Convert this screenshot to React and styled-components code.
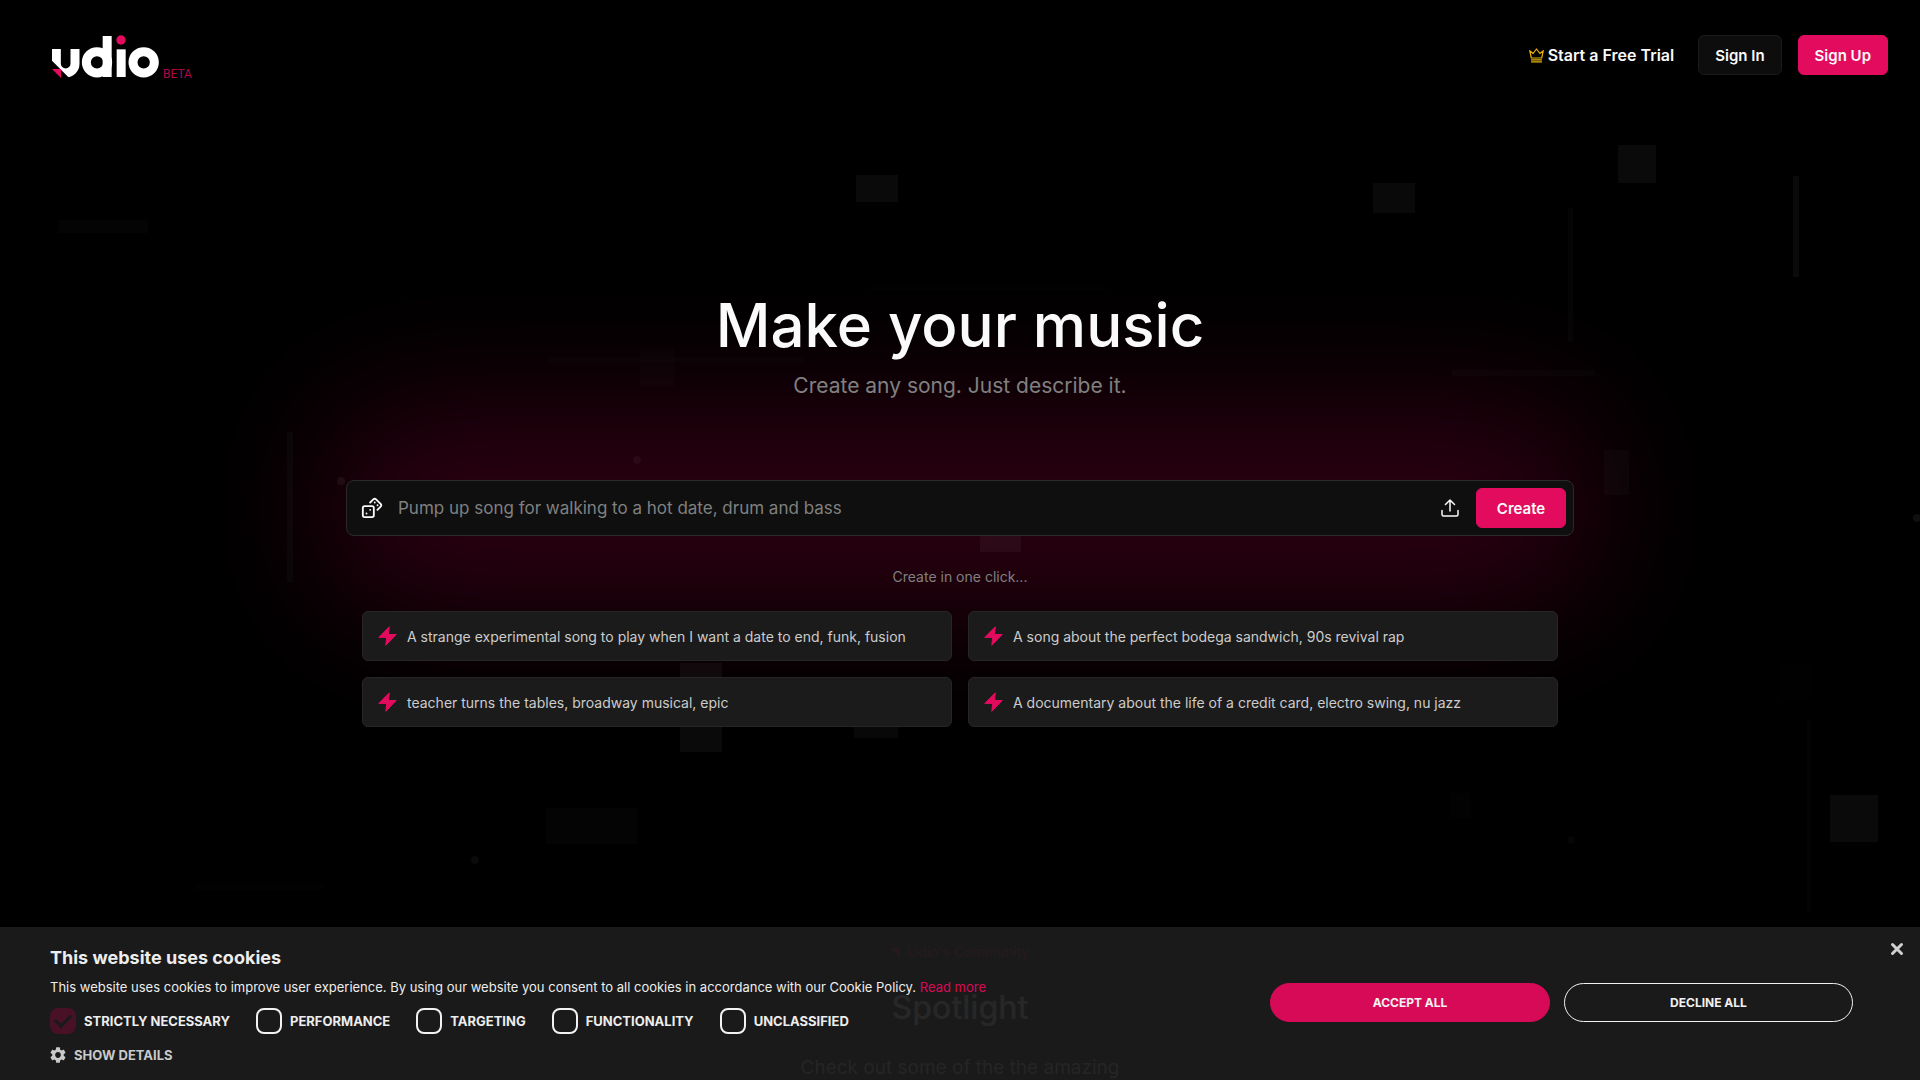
import React, { useState } from 'react';
import styled, { createGlobalStyle } from 'styled-components';
import { Dices } from 'lucide-react';
import { MdSettings } from 'react-icons/md';

const GlobalStyle = createGlobalStyle`
  * {
    box-sizing: border-box;
  }

  body {
    margin: 0;
    background: #000;
    color: #fafafa;
    font-family: Inter, "Liberation Sans", sans-serif;
  }

  button,
  input {
    font-family: inherit;
  }
`;

const Page = styled.div`
  position: relative;
  z-index: 0;
  height: 100vh;
  overflow: hidden;
`;

const Backdrop = styled.svg`
  position: absolute;
  inset: 0;
  z-index: -1;
  width: 100%;
  height: 100%;
`;

const Header = styled.header`
  display: flex;
  align-items: flex-start;
  justify-content: space-between;
  padding: 35px 32px 0 52px;
`;

const LogoLink = styled.a`
  display: flex;
  align-items: flex-end;
  gap: 4px;
  color: #b0084a;
  font-family: Roboto, sans-serif;
  font-size: 12px;
  line-height: 8px;
  text-decoration: none;
`;

const Nav = styled.nav`
  display: flex;
  align-items: center;
`;

const TrialLink = styled.a`
  display: flex;
  align-items: center;
  gap: 4px;
  margin-right: 24px;
  color: #fafafa;
  font-size: 16px;
  font-weight: 600;
  text-decoration: none;
`;

const Button = styled.button`
  height: 40px;
  padding: 0 16px;
  border: 1px solid ${({ $primary }) => ($primary ? '#e30b5d' : '#1a1a1a')};
  border-radius: 6px;
  background: ${({ $primary }) => ($primary ? '#e30b5d' : '#0d0d0d')};
  color: #fafafa;
  font-size: 15px;
  font-weight: 600;
  cursor: pointer;
`;

const NavButton = styled(Button)`
  & + & {
    margin-left: 16px;
  }
`;

const Hero = styled.main`
  display: flex;
  flex-direction: column;
  align-items: center;
  padding: 209px 32px 0;
`;

const Title = styled.h1`
  margin: 0;
  font-size: 60px;
  font-weight: 500;
  line-height: 76px;
`;

const Subtitle = styled.p`
  margin: 9px 0 0;
  color: #808080;
  font-size: 21px;
  line-height: 28px;
`;

const PromptForm = styled.form`
  position: relative;
  display: flex;
  align-items: center;
  width: 100%;
  max-width: 1228px;
  margin-top: 80px;
  padding: 7px;
  border: 1px solid #2a2a2a;
  border-radius: 8px;
  background: #0f0f0f;
`;

const Glow = styled.div`
  position: absolute;
  inset: -78px -24px -78px;
  z-index: -2;
  border-radius: 90px;
  background: #2a0010;
  filter: blur(64px);
`;

const IconButton = styled.button`
  display: flex;
  align-items: center;
  justify-content: center;
  width: 36px;
  height: 40px;
  padding: 0;
  border: 0;
  background: none;
  color: #fafafa;
  cursor: pointer;
`;

const PromptInput = styled.input`
  flex: 1;
  min-width: 0;
  padding: 0 8px;
  border: 0;
  outline: none;
  background: none;
  color: #fafafa;
  font-size: 17px;

  &::placeholder {
    color: #808080;
    opacity: 1;
  }
`;

const CreateButton = styled(Button)`
  width: 90px;
  margin-left: 8px;
`;

const QuickLabel = styled.p`
  margin: 31px 0 0;
  color: #808080;
  font-size: 14px;
  line-height: 20px;
`;

const Suggestions = styled.div`
  display: grid;
  grid-template-columns: 1fr 1fr;
  gap: 16px;
  width: 100%;
  max-width: 1196px;
  margin-top: 24px;
`;

const Suggestion = styled.button`
  display: flex;
  align-items: center;
  gap: 10px;
  height: 50px;
  padding: 0 15px;
  border: 1px solid #262626;
  border-radius: 6px;
  background: #1b1b1b;
  color: #ccc;
  font-size: 14px;
  text-align: left;
  cursor: pointer;
`;

const Community = styled.section`
  display: flex;
  flex-direction: column;
  align-items: center;
  margin-top: 215px;
`;

const CommunityTag = styled.p`
  display: flex;
  align-items: center;
  gap: 8px;
  margin: 0;
  color: #e30b5d;
  font-size: 14px;
  line-height: 20px;
`;

const CommunityTitle = styled.h2`
  margin: 26px 0;
  font-size: 32px;
  font-weight: 500;
  line-height: 40px;
`;

const CommunityText = styled.p`
  margin: 0;
  color: #ccc;
  font-size: 19px;
  line-height: 28px;
`;

const CookieBar = styled.aside`
  position: fixed;
  right: 0;
  bottom: 0;
  left: 0;
  display: flex;
  align-items: center;
  justify-content: space-between;
  padding: 20px 67px 15px 50px;
  background: #1c1c1c;
  opacity: 0.95;
`;

const CookieTitle = styled.h2`
  margin: 0;
  font-size: 18px;
  font-weight: 700;
  line-height: 22px;
`;

const CookieText = styled.p`
  margin: 8px 0 11px;
  font-size: 13px;
  line-height: 20px;
`;

const CookieLink = styled.a`
  color: #e30b5d;
  text-decoration: none;
`;

const Options = styled.div`
  display: flex;
  flex-wrap: wrap;
  gap: 26px;
`;

const Option = styled.label`
  display: flex;
  align-items: center;
  gap: 8px;
  font-size: 13px;
  font-weight: 700;
  line-height: 26px;
`;

const Checkbox = styled.input`
  appearance: none;
  display: grid;
  place-items: center;
  width: 26px;
  height: 26px;
  margin: 0;
  border: 2px solid #fff;
  border-radius: 8px;

  &:disabled {
    border-color: #4d1228;
    background: #4d1228;
  }

  &:checked::before {
    content: '';
    width: 13px;
    height: 7px;
    margin-bottom: 4px;
    border: solid #1c1c1c;
    border-width: 0 0 3px 3px;
    transform: rotate(-45deg);
  }
`;

const DetailsButton = styled.button`
  display: flex;
  align-items: center;
  gap: 8px;
  margin-top: 11px;
  padding: 0;
  border: 0;
  background: none;
  color: #d4d4d4;
  font-size: 13px;
  font-weight: 700;
  line-height: 20px;
  cursor: pointer;
`;

const CookieActions = styled.div`
  display: flex;
  gap: 14px;
  margin-bottom: 8px;
`;

const CookieButton = styled.button`
  width: ${({ $primary }) => ($primary ? '280px' : '289px')};
  height: 39px;
  border: 1px solid ${({ $primary }) => ($primary ? '#e30b5d' : '#fff')};
  border-radius: 20px;
  background: ${({ $primary }) => ($primary ? '#e30b5d' : 'transparent')};
  color: #fff;
  font-size: 12px;
  font-weight: 700;
  cursor: pointer;
`;

const CloseButton = styled.button`
  position: absolute;
  top: 11px;
  right: 12px;
  display: flex;
  padding: 4px;
  border: 0;
  background: none;
  color: #ddd;
  cursor: pointer;
`;

const suggestions = [
    'A strange experimental song to play when I want a date to end, funk, fusion',
    'A song about the perfect bodega sandwich, 90s revival rap',
    'teacher turns the tables, broadway musical, epic',
    'A documentary about the life of a credit card, electro swing, nu jazz',
];

const cookieOptions = ['STRICTLY NECESSARY', 'PERFORMANCE', 'TARGETING', 'FUNCTIONALITY', 'UNCLASSIFIED'];

// x, y, width, height, opacity
const blocks = [
    [856, 175, 42, 27, 0.04],
    [1373, 183, 42, 30, 0.035],
    [1618, 145, 38, 38, 0.04],
    [59, 220, 89, 13, 0.015],
    [1568, 208, 5, 134, 0.02],
    [1793, 176, 6, 101, 0.04],
    [640, 348, 34, 38, 0.012],
    [548, 357, 256, 6, 0.012],
    [870, 285, 236, 5, 0.006],
    [1452, 370, 143, 6, 0.014],
    [287, 432, 6, 150, 0.025],
    [1604, 450, 25, 45, 0.02],
    [980, 516, 41, 36, 0.04],
    [680, 663, 42, 89, 0.04],
    [854, 700, 44, 38, 0.03],
    [546, 808, 91, 36, 0.015],
    [1830, 795, 48, 47, 0.04],
    [1807, 720, 4, 192, 0.015],
    [1450, 793, 21, 25, 0.006],
    [196, 884, 127, 6, 0.006],
    [1780, 663, 31, 37, 0.004],
];

const dots = [
    [341, 481, 0.05],
    [637, 460, 0.04],
    [1917, 518, 0.06],
    [475, 860, 0.04],
    [1571, 840, 0.02],
];

const Logo = () => (
    <svg width="107" height="43" viewBox="0 0 321 129" fill="#fff" aria-hidden="true">
        <clipPath id="udio-cut">
            <polygon points="0,42 84,42 84,129 51,128 0,77" />
        </clipPath>
        <g clipPath="url(#udio-cut)">
            <rect x="13" y="0" width="56" height="114" rx="28" fill="none" stroke="#fff" strokeWidth="27" />
        </g>
        <polygon points="0,102 27,102 27,129" fill="#e30b5d" />
        <circle cx="135" cy="82" r="32" fill="none" stroke="#fff" strokeWidth="27" />
        <rect x="152" y="3" width="27" height="123" />
        <rect x="194" y="43" width="27" height="83" />
        <circle cx="207" cy="15" r="14" fill="#e30b5d" />
        <circle cx="275" cy="82" r="32" fill="none" stroke="#fff" strokeWidth="27" />
    </svg>
);

const CrownIcon = () => (
    <svg width="15" height="15" viewBox="0 0 15 15" fill="none" stroke="#eab308" strokeWidth="1.2" strokeLinecap="round" strokeLinejoin="round">
        <path d="M2.3 10 .7 2.6l3.4 2.9L7.5 1l3.4 4.5 3.4-2.9L12.7 10Z" />
        <path d="M2.5 11.9h10M2.5 13.9h10" />
    </svg>
);

const UploadIcon = () => (
    <svg width="18" height="18" viewBox="0 0 18 18" fill="none" stroke="currentColor" strokeWidth="1.5" strokeLinecap="round" strokeLinejoin="round">
        <path d="M9 12V1M4.5 5.5 9 1l4.5 4.5M1 11.5v4a1.5 1.5 0 0 0 1.5 1.5h13a1.5 1.5 0 0 0 1.5-1.5v-4" />
    </svg>
);

const BoltIcon = () => (
    <svg width="19" height="20" viewBox="0 0 19 20" fill="#e30b5d" stroke="#e30b5d" strokeLinejoin="round">
        <path d="M11.3.8.8 11.4h7.9L7.8 19.3 18.2 8.5h-7.8Z" />
    </svg>
);

const CloseIcon = () => (
    <svg width="14" height="14" viewBox="0 0 14 14" fill="none" stroke="currentColor" strokeWidth="3" strokeLinecap="round">
        <path d="m2.5 2.5 9 9M11.5 2.5l-9 9" />
    </svg>
);

const App = () => {
    const [prompt, setPrompt] = useState('');
    const [showCookies, setShowCookies] = useState(true);

    const closeCookies = () => {
        setShowCookies(false);
    };

    return (
        <>
            <GlobalStyle />
            <Page>
                <Backdrop viewBox="0 0 1920 1080" preserveAspectRatio="xMidYMin slice" fill="#fff" aria-hidden="true">
                    {blocks.map(([x, y, width, height, opacity]) => (
                        <rect key={`${x}-${y}`} x={x} y={y} width={width} height={height} opacity={opacity} />
                    ))}
                    {dots.map(([x, y, opacity]) => (
                        <circle key={x} cx={x} cy={y} r="4" opacity={opacity} />
                    ))}
                </Backdrop>
                <Header>
                    <LogoLink href="#" aria-label="udio">
                        <Logo />
                        BETA
                    </LogoLink>
                    <Nav>
                        <TrialLink href="#">
                            <CrownIcon />
                            Start a Free Trial
                        </TrialLink>
                        <NavButton>Sign In</NavButton>
                        <NavButton $primary>Sign Up</NavButton>
                    </Nav>
                </Header>
                <Hero>
                    <Title>Make your music</Title>
                    <Subtitle>Create any song. Just describe it.</Subtitle>
                    <PromptForm onSubmit={(e) => e.preventDefault()}>
                        <Glow />
                        <IconButton type="button" aria-label="Random prompt">
                            <Dices size={22} strokeWidth={2} />
                        </IconButton>
                        <PromptInput
                            aria-label="Song description"
                            placeholder="Pump up song for walking to a hot date, drum and bass"
                            value={prompt}
                            onChange={(e) => setPrompt(e.target.value)}
                        />
                        <IconButton type="button" aria-label="Upload">
                            <UploadIcon />
                        </IconButton>
                        <CreateButton $primary>Create</CreateButton>
                    </PromptForm>
                    <QuickLabel>Create in one click...</QuickLabel>
                    <Suggestions>
                        {suggestions.map((text) => (
                            <Suggestion key={text} onClick={() => setPrompt(text)}>
                                <BoltIcon />
                                {text}
                            </Suggestion>
                        ))}
                    </Suggestions>
                </Hero>
                <Community>
                    <CommunityTag>
                        <svg width="9" height="9" viewBox="0 0 9 9" fill="currentColor">
                            <path d="M0 0h9v9Z" />
                        </svg>
                        Udio's Community
                    </CommunityTag>
                    <CommunityTitle>Spotlight</CommunityTitle>
                    <CommunityText>Check out some of the the amazing</CommunityText>
                </Community>
            </Page>
            {showCookies && (
                <CookieBar>
                    <div>
                        <CookieTitle>This website uses cookies</CookieTitle>
                        <CookieText>
                            This website uses cookies to improve user experience. By using our website you consent to all cookies in
                            accordance with our Cookie Policy. <CookieLink href="#">Read more</CookieLink>
                        </CookieText>
                        <Options>
                            {cookieOptions.map((name, i) => (
                                <Option key={name}>
                                    <Checkbox type="checkbox" defaultChecked={i === 0} disabled={i === 0} />
                                    {name}
                                </Option>
                            ))}
                        </Options>
                        <DetailsButton>
                            <MdSettings size={16} viewBox="2 2 20 20" />
                            SHOW DETAILS
                        </DetailsButton>
                    </div>
                    <CookieActions>
                        <CookieButton $primary onClick={closeCookies}>ACCEPT ALL</CookieButton>
                        <CookieButton onClick={closeCookies}>DECLINE ALL</CookieButton>
                    </CookieActions>
                    <CloseButton aria-label="Close" onClick={closeCookies}>
                        <CloseIcon />
                    </CloseButton>
                </CookieBar>
            )}
        </>
    );
};

export default App;
